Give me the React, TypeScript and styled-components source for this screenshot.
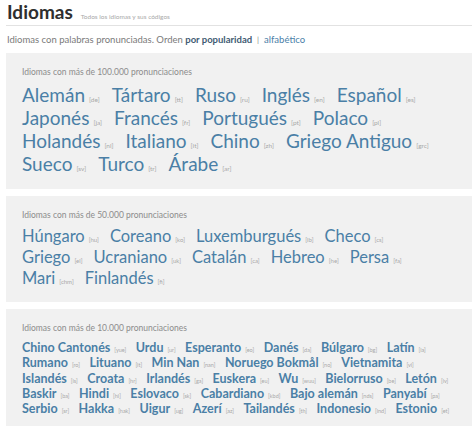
import React from "react";
import styled, { createGlobalStyle } from "styled-components";

type Lang = [string, string];

type Group = {
  label: string;
  size: number;
  lineHeight: number;
  weight: number;
  codeSize: number;
  gap: number;
  labelGap: number;
  bottom: number;
  right: number;
  langs: Lang[];
};

const groups: Group[] = [
  {
    label: "Idiomas con más de 100.000 pronunciaciones",
    size: 19,
    lineHeight: 23,
    weight: 400,
    codeSize: 6.5,
    gap: 12,
    labelGap: 4,
    bottom: 14,
    right: 18,
    langs: [
      ["Alemán", "de"],
      ["Tártaro", "tt"],
      ["Ruso", "ru"],
      ["Inglés", "en"],
      ["Español", "es"],
      ["Japonés", "ja"],
      ["Francés", "fr"],
      ["Portugués", "pt"],
      ["Polaco", "pl"],
      ["Holandés", "nl"],
      ["Italiano", "it"],
      ["Chino", "zh"],
      ["Griego Antiguo", "grc"],
      ["Sueco", "sv"],
      ["Turco", "tr"],
      ["Árabe", "ar"],
    ],
  },
  {
    label: "Idiomas con más de 50.000 pronunciaciones",
    size: 16.5,
    lineHeight: 21,
    weight: 400,
    codeSize: 6,
    gap: 11,
    labelGap: 4,
    bottom: 13,
    right: 18,
    langs: [
      ["Húngaro", "hu"],
      ["Coreano", "ko"],
      ["Luxemburgués", "lb"],
      ["Checo", "cs"],
      ["Griego", "el"],
      ["Ucraniano", "uk"],
      ["Catalán", "ca"],
      ["Hebreo", "he"],
      ["Persa", "fa"],
      ["Mari", "chm"],
      ["Finlandés", "fi"],
    ],
  },
  {
    label: "Idiomas con más de 10.000 pronunciaciones",
    size: 12.5,
    lineHeight: 15.3,
    weight: 700,
    codeSize: 5.5,
    gap: 9.5,
    labelGap: 5,
    bottom: 11,
    right: 6,
    langs: [
      ["Chino Cantonés", "yue"],
      ["Urdu", "ur"],
      ["Esperanto", "eo"],
      ["Danés", "da"],
      ["Búlgaro", "bg"],
      ["Latín", "la"],
      ["Rumano", "ro"],
      ["Lituano", "lt"],
      ["Min Nan", "nan"],
      ["Noruego Bokmål", "no"],
      ["Vietnamita", "vi"],
      ["Islandés", "is"],
      ["Croata", "hr"],
      ["Irlandés", "ga"],
      ["Euskera", "eu"],
      ["Wu", "wuu"],
      ["Bielorruso", "be"],
      ["Letón", "lv"],
      ["Baskir", "ba"],
      ["Hindi", "hi"],
      ["Eslovaco", "sk"],
      ["Cabardiano", "kbd"],
      ["Bajo alemán", "nds"],
      ["Panyabí", "pa"],
      ["Serbio", "sr"],
      ["Hakka", "hak"],
      ["Uigur", "ug"],
      ["Azerí", "az"],
      ["Tailandés", "th"],
      ["Indonesio", "ind"],
      ["Estonio", "et"],
    ],
  },
];

const GlobalStyle = createGlobalStyle`
  body {
    margin: 0;
    background: #ffffff;
    font-family: Lato, "Open Sans", sans-serif;
  }
`;

const Page = styled.div`
  width: 474px;
  padding: 0 2px 0 6px;
  box-sizing: border-box;
`;

const Header = styled.div`
  display: flex;
  align-items: baseline;
  gap: 8px;
  padding: 0 0 2px 1px;
  border-bottom: 1px solid #e2e2e2;
`;

const Title = styled.h1`
  margin: 0;
  font-size: 19px;
  line-height: 23px;
  font-weight: 700;
  color: #2f2f2f;
`;

const Subtitle = styled.span`
  font-size: 6.5px;
  color: #a9a9a9;
`;

const Intro = styled.p`
  margin: 0;
  padding: 8px 0 7px 1px;
  font-size: 9.5px;
  line-height: 12px;
  color: #7a7a7a;
`;

const Strong = styled.span`
  font-weight: 700;
  color: #3f5b73;
`;

const Sep = styled.span`
  color: #8a8a8a;
  margin: 0 5px;
  font-size: 8px;
`;

const Link = styled.span`
  color: #4a80a8;
`;

const Sections = styled.div`
  display: flex;
  flex-direction: column;
  gap: 7px;
`;

const Box = styled.section<{ $bottom: number; $right: number }>`
  background: #f1f1f1;
  padding: 12px ${(p) => p.$right}px ${(p) => p.$bottom}px 16px;
`;

const Label = styled.div<{ $gap: number }>`
  font-size: 8.5px;
  line-height: 14px;
  color: #8c8c8c;
  margin-bottom: ${(p) => p.$gap}px;
`;

const Words = styled.div<{ $size: number; $lh: number; $weight: number }>`
  display: flex;
  flex-wrap: wrap;
  font-size: ${(p) => p.$size}px;
  line-height: ${(p) => p.$lh}px;
  font-weight: ${(p) => p.$weight};
  color: #4a7fa6;
`;

const Item = styled.span<{ $gap: number }>`
  white-space: nowrap;
  margin-right: ${(p) => p.$gap}px;
`;

const Code = styled.span<{ $size: number }>`
  font-size: ${(p) => p.$size}px;
  line-height: 0;
  font-weight: 400;
  color: #a8a8a8;
  margin-left: 4px;
`;

export default function App() {
  return (
    <>
      <GlobalStyle />
      <Page>
        <Header>
          <Title>Idiomas</Title>
          <Subtitle>Todos los idiomas y sus códigos</Subtitle>
        </Header>
        <Intro>
          Idiomas con palabras pronunciadas. Orden <Strong>por popularidad</Strong>
          <Sep>|</Sep>
          <Link>alfabético</Link>
        </Intro>
        <Sections>
          {groups.map((g) => (
            <Box key={g.label} $bottom={g.bottom} $right={g.right}>
              <Label $gap={g.labelGap}>{g.label}</Label>
              <Words $size={g.size} $lh={g.lineHeight} $weight={g.weight}>
                {g.langs.map(([name, code]) => (
                  <Item key={code} $gap={g.gap}>
                    {name}
                    <Code $size={g.codeSize}>[{code}]</Code>
                  </Item>
                ))}
              </Words>
            </Box>
          ))}
        </Sections>
      </Page>
    </>
  );
}
